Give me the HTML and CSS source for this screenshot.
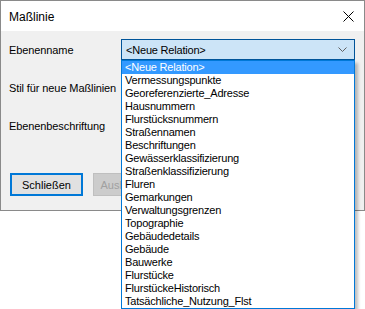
FILE: index.html
```html
<!DOCTYPE html>
<html>
<head>
  <title>Maßlinie</title>
  <link rel="stylesheet" href="styles.css">
</head>
<body>

  <div class="screen">
    <div class="window">
      <div class="titlebar">
        <span class="title">Maßlinie</span>
        <svg class="close" width="11" height="11" viewBox="0 0 11 11">
          <path d="M0.5 0.5 L10.5 10.5 M10.5 0.5 L0.5 10.5" stroke="#000" stroke-width="1" fill="none"/>
        </svg>
      </div>

      <div class="content">
        <div class="row">
          <span class="label">Ebenenname</span>
          <div class="combo">
            <span>&lt;Neue Relation&gt;</span>
            <svg class="arrow" width="9" height="5" viewBox="0 0 9 5">
              <path d="M0.5 0.5 L4.5 4.5 L8.5 0.5" stroke="#606060" stroke-width="1" fill="none"/>
            </svg>
          </div>
        </div>
        <div class="row">
          <span class="label">Stil für neue Maßlinien</span>
        </div>
        <div class="row">
          <span class="label">Ebenenbeschriftung</span>
        </div>

        <div class="buttons">
          <button class="btn focused">Schließen</button>
          <button class="btn" disabled>Ausblenden</button>
        </div>
      </div>
    </div>

    <ul class="dropdown">
      <li class="selected">&lt;Neue Relation&gt;</li>
      <li>Vermessungspunkte</li>
      <li>Georeferenzierte_Adresse</li>
      <li>Hausnummern</li>
      <li>Flurstücksnummern</li>
      <li>Straßennamen</li>
      <li>Beschriftungen</li>
      <li>Gewässerklassifizierung</li>
      <li>Straßenklassifizierung</li>
      <li>Fluren</li>
      <li>Gemarkungen</li>
      <li>Verwaltungsgrenzen</li>
      <li>Topographie</li>
      <li>Gebäudedetails</li>
      <li>Gebäude</li>
      <li>Bauwerke</li>
      <li>Flurstücke</li>
      <li>FlurstückeHistorisch</li>
      <li>Tatsächliche_Nutzung_Flst</li>
    </ul>
  </div>

</body>
</html>
```

FILE: styles.css
```css
html, body {
  margin: 0;
  background: #fff;
  font-family: "Liberation Sans", Arial, sans-serif;
  color: #000;
}
.screen {
  position: relative;
  width: 365px;
  height: 309px;
  overflow: visible;
}
.window {
  width: 365px;
  height: 211px;
  box-sizing: border-box;
  border: 1px solid #8a8a8a;
  background: #f0f0f0;
}
.titlebar {
  height: 30px;
  background: #fff;
  display: flex;
  align-items: center;
  justify-content: space-between;
  padding: 0 10px 0 8px;
}
.title {
  font-size: 12px;
  margin-top: 1px;
}
.close {
  display: block;
  margin-top: 1px;
}
.content {
  padding: 8px 9px 0 8px;
  display: flex;
  flex-direction: column;
  gap: 17px;
}
.row {
  display: flex;
  align-items: center;
  height: 21px;
}
.label {
  width: 112px;
  font-size: 11px;
  letter-spacing: -0.1px;
}
.combo {
  width: 234px;
  height: 21px;
  box-sizing: border-box;
  border: 1px solid #005499;
  background: #cce4f7;
  display: flex;
  align-items: center;
  justify-content: space-between;
  padding: 0 7px 0 4px;
  font-size: 11px;
  letter-spacing: -0.2px;
}
.buttons {
  display: flex;
  gap: 10px;
  margin-top: 20px;
  margin-left: 1px;
}
.btn {
  width: 73px;
  height: 23px;
  box-sizing: border-box;
  border: 1px solid #adadad;
  background: #e1e1e1;
  font-family: "Liberation Sans", Arial, sans-serif;
  font-size: 11px;
  color: #000;
  padding: 0;
}
.btn.focused {
  border: 2px solid #0078d7;
}
.btn:disabled {
  background: #cccccc;
  border-color: #bfbfbf;
  color: #a0a0a0;
}
.dropdown {
  position: absolute;
  left: 121px;
  top: 60px;
  width: 234px;
  margin: 0;
  padding: 0;
  list-style: none;
  box-sizing: border-box;
  border: 1px solid #0078d7;
  background: #fff;
  box-shadow: 3px 3px 3px rgba(0, 0, 0, 0.25);
  font-size: 11px;
  letter-spacing: -0.2px;
}
.dropdown li {
  height: 13px;
  line-height: 13px;
  padding-left: 3px;
  white-space: nowrap;
}
.dropdown li.selected {
  background: #3399ff;
  color: #fff;
}
```
